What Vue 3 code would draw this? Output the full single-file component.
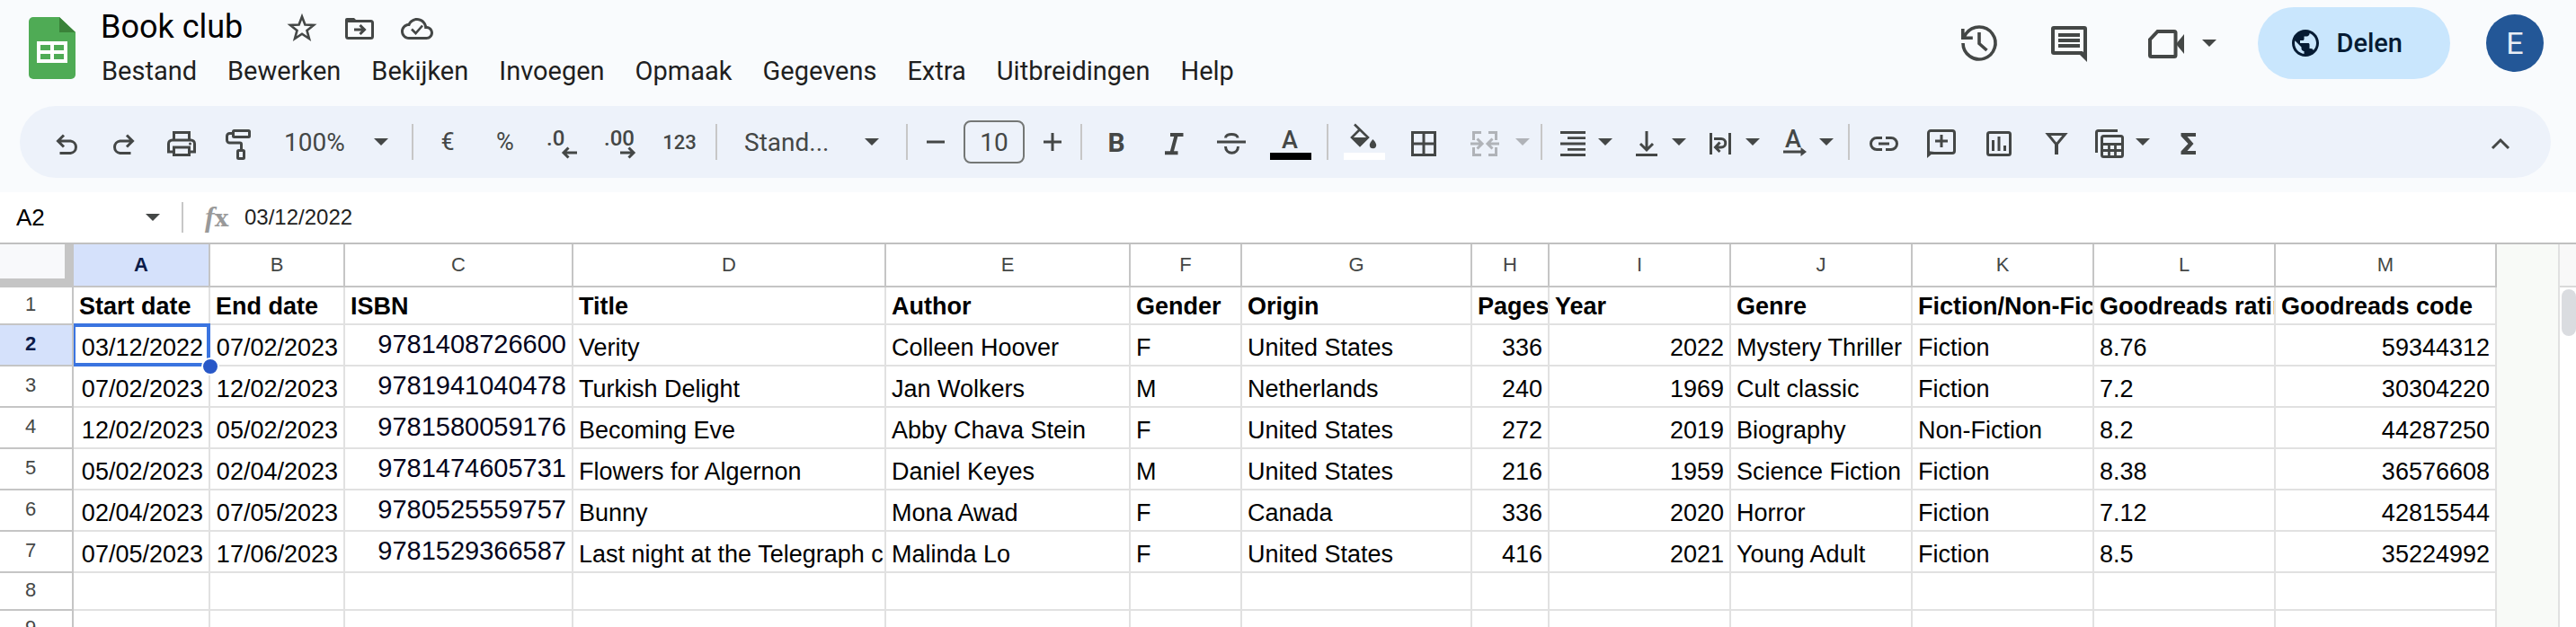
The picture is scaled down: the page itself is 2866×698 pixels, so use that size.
<script setup>
import { h, ref } from 'vue'

const icons = {
  undo: '<path d="M17 12.5l-6.500 6.500 6.500 6.500M11 19h13.500a6.800 6.800 0 0 1 0 13.500H12.500"/>',
  redo: '<path d="M23 12.500l6.500 6.500-6.500 6.500M29 19H15.500a6.800 6.800 0 0 0 0 13.500H27.500"/>',
  print:
    '<path d="M11.500 18V9.500h17V18M10 31H5.500v-9a4 4 0 0 1 4-4h21a4 4 0 0 1 4 4v9H30"/><path d="M11.500 26h17v8.500h-17z"/><circle cx="29.500" cy="22" r="1.500" fill="currentColor" stroke="none"/>',
  roller:
    '<rect x="13.500" y="7.500" width="18" height="7" rx="1"/><path d="M13 10.500h-3.500a3 3 0 0 0-3 3V18a3 3 0 0 0 3 3H21a1.500 1.500 0 0 1 1.500 1.500V29"/><rect x="18.500" y="29.500" width="7" height="9" rx="1"/>',
  decLess:
    '<text x="2" y="24">.0</text><path d="M21 32h15M26.500 26.500L21 32l5.500 5.500"/>',
  decMore:
    '<text x="2" y="24">.00</text><path d="M20 32h15M29.500 26.500L35 32l-5.500 5.500"/>',
  minus: '<path d="M10 20h20"/>',
  plus: '<path d="M10 20h20M20 10v20"/>',
  italic: '<path d="M16 12h14.500M10 32.200h14.500M22.800 12l-5.300 20" stroke-width="4"/>',
  strike:
    '<path d="M4 20h32M13.500 15.500c0-5.500 13.500-5.500 13.500 0M13.500 25c0 9.500 14 9.500 14 0"/>',
  textColor: '<text x="10" y="27">A</text><path d="M-3 36h46" stroke="#000" stroke-width="8"/>',
  fill:
    '<path d="M9 0.500l15 14.500-9 9L6 15l9-9" stroke-width="2.600"/><path d="M5 15h20L15 25z" fill="currentColor" stroke="none"/><path d="M29.500 17s-3.700 4-3.700 6.600a3.700 3.700 0 0 0 7.400 0c0-2.600-3.700-6.600-3.700-6.600z" fill="currentColor" stroke="none"/><path d="M-3 36h46" stroke="#fff" stroke-width="8"/>',
  borders: '<path d="M7.500 9.500h25v25h-25zM20 9.500v25M7.500 22h25"/>',
  merge:
    '<path d="M7.500 18V9.500H16M24 9.500h8.500V18M32.500 26v8.500H24M16 34.500H7.500V26M4 22h12M11.500 16.500L17 22l-5.500 5.500M36 22H24M28.500 16.500L23 22l5.500 5.500"/>',
  alignRight: '<path d="M6 9.500h28M14 15.700h20M6 22h28M14 28.300h20M6 34.500h28" stroke-width="2.800"/>',
  alignBottom: '<path d="M20 8v21M13 22l7 7 7-7M8 34.500h24"/>',
  wrap: '<path d="M9.500 10v24M30.500 10v24M13 16.500h8a4.700 4.700 0 0 1 0 9.500h-5M19.500 20.500L14.500 26l5 5"/>',
  rotate:
    '<text x="10" y="26">A</text><path d="M8 31h22"/><path d="M27.500 26v10l6.500-5z" fill="currentColor" stroke="none"/>',
  link: '<path d="M18 15.500h-6a6.500 6.500 0 0 0 0 13h6M22 15.500h6a6.500 6.500 0 0 1 0 13h-6M14 22h12"/>',
  comment:
    '<path d="M5.500 34V10A2.500 2.500 0 0 1 8 7.500h24a2.500 2.500 0 0 1 2.500 2.500v20a2.500 2.500 0 0 1-2.500 2.500H8M20 12v14M13 19h14"/><path d="M4 38v-8l8 1z" fill="currentColor" stroke="none"/>',
  chart:
    '<rect x="7.500" y="9.500" width="25" height="25" rx="2"/><path d="M13.500 18v12M20 14v16M26.500 24v6"/>',
  filter: '<path d="M10.500 11.500h19L20 23z"/><path d="M20 22v12" stroke-width="4"/>',
  tables:
    '<path d="M4.500 32V9.500a2 2 0 0 1 2-2H28"/><rect x="10.500" y="13.500" width="23" height="23" rx="2"/><path d="M10.500 22.500h23M10.500 29.500h23M18.500 22.500v14M25.500 22.500v14" stroke-width="2.800"/>',
  sum: '<path d="M12.500 10H29v4H19.500l7 8-7 8H29v4H12.500v-3.500l8-8.500-8-8.500z" fill="currentColor" stroke="none"/>',
  collapse: '<path d="M11 27l9-9 9 9"/>',
  star: '<path d="M20 8.500l3.400 9 9.600.4-7.500 6 2.500 9.100-8-5.300-8 5.300 2.500-9.100-7.500-6 9.600-.4z" stroke-width="2.600"/>',
  move:
    '<path d="M5.500 13v17.500a2 2 0 0 0 2 2h25a2 2 0 0 0 2-2v-15a2 2 0 0 0-2-2H6"/><path d="M4 14v-2a2 2 0 0 1 2-2h8l4 4z" fill="currentColor" stroke="none"/><path d="M14 23h11M20.500 18l5 5-5 5"/>',
  cloud:
    '<g transform="translate(2 4) scale(1.500)" stroke="none" fill="currentColor"><path d="M19.350 10.040C18.670 6.590 15.640 4 12 4 9.110 4 6.600 5.640 5.350 8.040 2.340 8.360 0 10.910 0 14c0 3.310 2.690 6 6 6h13c2.760 0 5-2.240 5-5 0-2.640-2.050-4.780-4.650-4.960zM19 18H6c-2.210 0-4-1.790-4-4s1.790-4 4-4h.71C7.370 7.690 9.480 6 12 6c3.040 0 5.500 2.460 5.500 5.500v.5H19c1.660 0 3 1.340 3 3s-1.340 3-3 3z"/></g><path d="M14 22.500l4.500 4.500 7.500-8.500" stroke-width="2.600"/>',
  history:
    '<path d="M6 24a18 18 0 1 0 3.500-10.700L6.500 18M5.800 8v10.200h11M24 12v12.500l8.500 7.500" stroke-width="3.600"/>',
  notes:
    '<path d="M6 8a1 1 0 0 1 1-1h34a1 1 0 0 1 1 1v31l-4-4H7a1 1 0 0 1-1-1zM12 15h24M12 21h24M12 27h24" stroke-width="4"/><path d="M34 35h10v10z" fill="currentColor" stroke="none"/>',
  video:
    '<path d="M14.500 11H33a1.500 1.500 0 0 1 1.500 1.500v25A1.500 1.500 0 0 1 33 39H7.500A1.500 1.500 0 0 1 6 37.500V20z" stroke-width="4"/><path d="M44 14l-9 11 9 11z" fill="currentColor" stroke="none"/>',
  globe:
    '<path transform="scale(1.500)" stroke="none" fill="currentColor" d="M12 2C6.480 2 2 6.480 2 12s4.480 10 10 10 10-4.480 10-10S17.520 2 12 2zm-1 17.930c-3.950-.49-7-3.850-7-7.930 0-.62.08-1.210.21-1.790L9 15v1c0 1.100.9 2 2 2v1.930zm6.900-2.540c-.26-.81-1-1.390-1.900-1.390h-1v-3c0-.55-.45-1-1-1H8v-2h2c.55 0 1-.45 1-1V7h2c1.100 0 2-.9 2-2v-.41c2.930 1.190 5 4.060 5 7.410 0 2.080-.8 3.970-2.100 5.390z"/>',
}

const Icon = (props) =>
  h('svg', {
    viewBox: `0 0 ${props.size || 40} ${props.size || 40}`,
    width: props.size || 40,
    height: props.size || 40,
    fill: 'none',
    stroke: 'currentColor',
    'stroke-width': 3,
    'aria-hidden': 'true',
    innerHTML: icons[props.name],
  })
Icon.props = ['name', 'size']

const Caret = () =>
  h('svg', { viewBox: '0 0 16 8', width: 16, height: 8, 'aria-hidden': 'true' }, [
    h('path', { d: 'M0 0h16L8 8z', fill: 'currentColor' }),
  ])

const title = ref('Book club')
const zoom = ref('100%')
const font = ref('Stand...')
const fontSize = ref('10')
const cellName = ref('A2')
const cellValue = ref('03/12/2022')

const menus = ['Bestand', 'Bewerken', 'Bekijken', 'Invoegen', 'Opmaak', 'Gegevens', 'Extra', 'Uitbreidingen', 'Help']

const alignMenus = [
  ['alignRight', 'Horizontaal uitlijnen'],
  ['alignBottom', 'Verticaal uitlijnen'],
  ['wrap', 'Tekstterugloop'],
  ['rotate', 'Tekst draaien'],
]
const insertTools = [
  ['link', 'Link invoegen'],
  ['comment', 'Opmerking toevoegen'],
  ['chart', 'Diagram invoegen'],
  ['filter', 'Filter maken'],
]

const columns = [
  { name: 'A', width: 152, align: 'right' },
  { name: 'B', width: 150, align: 'right' },
  { name: 'C', width: 254, align: 'isbn' },
  { name: 'D', width: 348 },
  { name: 'E', width: 272 },
  { name: 'F', width: 124 },
  { name: 'G', width: 256 },
  { name: 'H', width: 86, align: 'right' },
  { name: 'I', width: 202, align: 'right' },
  { name: 'J', width: 202 },
  { name: 'K', width: 202 },
  { name: 'L', width: 202 },
  { name: 'M', width: 246, align: 'right' },
]

const rows = [
  ['Start date', 'End date', 'ISBN', 'Title', 'Author', 'Gender', 'Origin', 'Pages', 'Year', 'Genre', 'Fiction/Non-Fiction', 'Goodreads rating', 'Goodreads code'],
  ['03/12/2022', '07/02/2023', '9781408726600', 'Verity', 'Colleen Hoover', 'F', 'United States', '336', '2022', 'Mystery Thriller', 'Fiction', '8.76', '59344312'],
  ['07/02/2023', '12/02/2023', '9781941040478', 'Turkish Delight', 'Jan Wolkers', 'M', 'Netherlands', '240', '1969', 'Cult classic', 'Fiction', '7.2', '30304220'],
  ['12/02/2023', '05/02/2023', '9781580059176', 'Becoming Eve', 'Abby Chava Stein', 'F', 'United States', '272', '2019', 'Biography', 'Non-Fiction', '8.2', '44287250'],
  ['05/02/2023', '02/04/2023', '9781474605731', 'Flowers for Algernon', 'Daniel Keyes', 'M', 'United States', '216', '1959', 'Science Fiction', 'Fiction', '8.38', '36576608'],
  ['02/04/2023', '07/05/2023', '9780525559757', 'Bunny', 'Mona Awad', 'F', 'Canada', '336', '2020', 'Horror', 'Fiction', '7.12', '42815544'],
  ['07/05/2023', '17/06/2023', '9781529366587', 'Last night at the Telegraph club', 'Malinda Lo', 'F', 'United States', '416', '2021', 'Young Adult', 'Fiction', '8.5', '35224992'],
  [],
  [],
]

const isSelected = (r, c) => r === 1 && c === 0
</script>

<template>
  <div class="app">
    <header class="header">
      <a class="logo" href="#" aria-label="Spreadsheets">
        <svg viewBox="0 0 52 70" width="52" height="70" aria-hidden="true">
          <path d="M5 0h29l18 17v47a5 5 0 0 1-5 5H5a5 5 0 0 1-5-5V5a5 5 0 0 1 5-5z" fill="#4fab55" />
          <path d="M34 0l18 17H34z" fill="#3a8239" />
          <path d="M9 27h34v24H9z" fill="#fff" />
          <path d="M13 31h11v6H13zM28 31h11v6H28zM13 41h11v6H13zM28 41h11v6H28z" fill="#4fab55" />
        </svg>
      </a>
      <div class="doc">
        <div class="doc-title">
          <input v-model="title" class="title-input" aria-label="Naam van document" />
          <button class="tool" aria-label="Ster"><Icon name="star" /></button>
          <button class="tool" aria-label="Verplaatsen"><Icon name="move" /></button>
          <button class="tool" aria-label="Documentstatus"><Icon name="cloud" /></button>
        </div>
        <nav class="menus">
          <button v-for="m in menus" :key="m" class="menu">{{ m }}</button>
        </nav>
      </div>
      <div class="actions">
        <button class="action" aria-label="Versiegeschiedenis"><Icon name="history" :size="48" /></button>
        <button class="action" aria-label="Opmerkingen"><Icon name="notes" :size="48" /></button>
        <button class="call" aria-label="Videogesprek"><Icon name="video" :size="48" /><Caret /></button>
        <button class="share"><Icon name="globe" :size="36" />Delen</button>
        <button class="avatar" aria-label="Account">E</button>
      </div>
    </header>

    <div class="toolbar" role="toolbar">
      <button class="tool" aria-label="Ongedaan maken"><Icon name="undo" /></button>
      <button class="tool" aria-label="Opnieuw"><Icon name="redo" /></button>
      <button class="tool" aria-label="Afdrukken"><Icon name="print" /></button>
      <button class="tool" aria-label="Opmaak kopiëren"><Icon name="roller" /></button>
      <label class="pick zoom">
        <select v-model="zoom" aria-label="Zoomen"><option>100%</option></select><Caret />
      </label>
      <span class="sep"></span>
      <button class="tool symbol" aria-label="Valuta">€</button>
      <button class="tool symbol" aria-label="Percentage">%</button>
      <button class="tool" aria-label="Minder decimalen"><Icon name="decLess" /></button>
      <button class="tool" aria-label="Meer decimalen"><Icon name="decMore" /></button>
      <button class="tool wide digits" aria-label="Meer indelingen">123</button>
      <span class="sep"></span>
      <label class="pick font">
        <select v-model="font" aria-label="Lettertype"><option>Stand...</option></select><Caret />
      </label>
      <span class="sep"></span>
      <button class="tool step" aria-label="Kleiner"><Icon name="minus" /></button>
      <input v-model="fontSize" class="size" aria-label="Lettergrootte" />
      <button class="tool step" aria-label="Groter"><Icon name="plus" /></button>
      <span class="sep"></span>
      <button class="tool bold" aria-label="Vet">B</button>
      <button class="tool" aria-label="Cursief"><Icon name="italic" /></button>
      <button class="tool" aria-label="Doorhalen"><Icon name="strike" /></button>
      <button class="tool wide letter" aria-label="Tekstkleur"><Icon name="textColor" /></button>
      <span class="sep"></span>
      <button class="tool wide" aria-label="Opvulkleur"><Icon name="fill" /></button>
      <button class="tool" aria-label="Randen"><Icon name="borders" /></button>
      <button class="combo merge" disabled aria-label="Cellen samenvoegen"><Icon name="merge" /><Caret /></button>
      <span class="sep"></span>
      <button v-for="[icon, label] in alignMenus" :key="icon" class="combo letter" :aria-label="label">
        <Icon :name="icon" /><Caret />
      </button>
      <span class="sep"></span>
      <button v-for="[icon, label] in insertTools" :key="icon" class="tool" :aria-label="label">
        <Icon :name="icon" />
      </button>
      <button class="combo" aria-label="Tabelweergaven"><Icon name="tables" /><Caret /></button>
      <button class="tool" aria-label="Functies"><Icon name="sum" /></button>
      <button class="tool collapse" aria-label="Menu's verbergen"><Icon name="collapse" /></button>
    </div>

    <div class="formula">
      <label class="name-box">
        <input v-model="cellName" aria-label="Naamvak" /><Caret />
      </label>
      <span class="fx" aria-hidden="true"><i>f</i>x</span>
      <input v-model="cellValue" class="value" aria-label="Formulebalk" />
    </div>

    <main class="sheet">
      <div class="viewport">
        <table class="grid">
          <colgroup>
            <col class="row-col" />
            <col v-for="c in columns" :key="c.name" :style="{ width: c.width + 'px' }" />
          </colgroup>
          <thead>
            <tr>
              <td class="corner"></td>
              <th v-for="(c, i) in columns" :key="c.name" scope="col" :class="{ active: i === 0 }">{{ c.name }}</th>
            </tr>
          </thead>
          <tbody>
            <tr v-for="(row, r) in rows" :key="r" :class="{ heading: r === 0, filled: r > 0 && row.length }">
              <th scope="row" :class="{ active: r === 1 }">{{ r + 1 }}</th>
              <td v-for="(c, i) in columns" :key="c.name" :class="[r > 0 && c.align, { selected: isSelected(r, i) }]">
                <div class="cell">{{ row[i] }}</div>
                <span v-if="isSelected(r, i)" class="outline"></span>
                <span v-if="isSelected(r, i)" class="handle"></span>
              </td>
            </tr>
          </tbody>
        </table>
      </div>
      <div class="scrollbar">
        <div class="scroll-top"></div>
        <div class="thumb"></div>
      </div>
    </main>
  </div>
</template>

<style>
html,
body {
  overflow: hidden;
}
</style>

<style scoped>
.app,
.app * {
  box-sizing: border-box;
}
.app {
  display: flex;
  flex-direction: column;
  height: 100vh;
  background: #f9fbfd;
  color: #444746;
  font-family: Roboto, "Liberation Sans", sans-serif;
  font-size: 28px;
}
button,
input,
select {
  margin: 0;
  padding: 0;
  border: 0;
  background: none;
  color: inherit;
  font: inherit;
  outline: none;
}
svg {
  display: block;
  flex: none;
  overflow: visible;
}
.app :deep(svg text) {
  fill: currentColor;
  stroke: none;
  font-weight: 500;
  font-size: 24px;
}
.letter :deep(svg text) {
  font-size: 27px;
}

/* Header */
.header {
  display: flex;
  align-items: flex-start;
  min-height: 118px;
  padding: 8px 36px 0 32px;
}
.logo {
  margin-top: 11px;
}
.doc {
  display: flex;
  flex-direction: column;
  gap: 5px;
  margin-left: 12px;
}
.doc-title {
  display: flex;
  align-items: center;
  height: 44px;
  padding-left: 16px;
}
.title-input {
  width: 192px;
  color: #000;
  font-size: 36px;
}
.menus {
  display: flex;
}
.menu {
  height: 44px;
  padding: 0 17px;
  color: #1f1f1f;
  font-size: 29px;
  white-space: nowrap;
}
.actions {
  display: flex;
  align-items: center;
  height: 80px;
  margin-left: auto;
}
.action {
  display: flex;
  justify-content: center;
  width: 100px;
}
.call {
  display: flex;
  align-items: center;
  gap: 16px;
  padding-left: 34px;
}
.share {
  display: flex;
  align-items: center;
  gap: 16px;
  height: 80px;
  margin-left: 46px;
  padding: 0 53px 0 35px;
  border-radius: 40px;
  background: #c9e6fd;
  color: #061b33;
  font-size: 29px;
  font-weight: 500;
}
.avatar {
  width: 64px;
  height: 64px;
  margin-left: 40px;
  border-radius: 50%;
  background: #235797;
  color: #e9eef5;
  font-size: 34px;
}

/* Toolbar */
.toolbar {
  display: flex;
  align-items: center;
  flex: none;
  height: 80px;
  margin: 0 28px 16px 22px;
  padding: 0 24px 0 20px;
  border-radius: 40px;
  background: #edf2fa;
}
.tool {
  display: flex;
  align-items: center;
  justify-content: center;
  flex: none;
  width: 64px;
  height: 56px;
}
.wide {
  width: 68px;
}
.step {
  width: 50px;
}
.symbol {
  font-size: 27px;
}
.digits {
  font-size: 22px;
  font-weight: 500;
}
.bold {
  font-size: 30px;
  font-weight: 700;
}
.collapse {
  margin-left: auto;
}
.pick {
  display: flex;
  align-items: center;
  flex: none;
}
.pick select {
  appearance: none;
  flex: 1;
  min-width: 0;
}
.zoom {
  width: 154px;
  padding: 0 20px 0 18px;
}
.font {
  width: 198px;
  padding: 0 24px;
}
.sep {
  flex: none;
  width: 2px;
  height: 40px;
  margin: 0 6px;
  background: #c7c7c7;
}
.size {
  flex: none;
  width: 68px;
  height: 48px;
  margin: 0 6px;
  border: 2px solid #747775;
  border-radius: 8px;
  text-align: center;
}
.combo {
  display: flex;
  align-items: center;
  flex: none;
  gap: 8px;
  height: 56px;
  padding: 0 10px 0 8px;
}
.merge {
  gap: 14px;
  padding: 0 6px 0 16px;
  color: #b0b3b8;
}

/* Formula bar */
.formula {
  display: flex;
  align-items: center;
  flex: none;
  height: 58px;
  border-bottom: 2px solid #c0c0c0;
  background: #fff;
  font-family: "Liberation Sans", Arial, sans-serif;
}
.name-box {
  display: flex;
  align-items: center;
  height: 34px;
  width: 204px;
  padding: 0 24px 0 18px;
  border-right: 2px solid #c7c7c7;
}
.name-box input {
  flex: 1;
  min-width: 0;
  color: #000;
  font-size: 26px;
}
.fx {
  width: 68px;
  padding-left: 24px;
  color: #999;
  font-family: "DejaVu Serif", serif;
  font-size: 26px;
  font-weight: 700;
  line-height: 32px;
}
.fx i {
  font-family: "Liberation Serif", serif;
  font-size: 32px;
}
.value {
  flex: 1;
  color: #1f1f1f;
  font-size: 24px;
}

/* Sheet */
.sheet {
  display: flex;
  flex: 1;
  min-height: 0;
  background: #f8faf7;
}
.viewport {
  flex: 1;
  min-width: 0;
  overflow: hidden;
}
.grid {
  width: 0;
  border-spacing: 0;
  table-layout: fixed;
  background: #fff;
  color: #000;
  font-family: "Liberation Sans", Arial, sans-serif;
}
.row-col {
  width: 82px;
}
.grid th {
  padding: 0;
  border-right: 2px solid #c5c5c5;
  border-bottom: 2px solid #c5c5c5;
  color: #444746;
  font-size: 22px;
  font-weight: 400;
  line-height: 24px;
}
.grid thead th {
  height: 48px;
}
.grid tbody th {
  padding: 0 12px 3px 0;
}
.grid th.active {
  background: #d5e1fb;
  color: #0b1b49;
  font-weight: 700;
}
.corner {
  height: 48px;
  padding: 0;
  border-right: 10px solid #c5c5c5;
  border-bottom: 10px solid #c5c5c5;
  background: #f8f9fb;
}
.grid tbody tr {
  height: 42px;
}
.grid tbody tr.filled {
  height: 46px;
}
.grid tbody td {
  position: relative;
  padding: 0;
  border-right: 2px solid #e1e1e1;
  border-bottom: 2px solid #e1e1e1;
  vertical-align: bottom;
}
.cell {
  overflow: hidden;
  padding: 0 6px 4px;
  font-size: 27px;
  line-height: 30px;
  white-space: nowrap;
}
.heading .cell {
  font-weight: 700;
}
.right .cell {
  text-align: right;
}
.isbn .cell {
  padding-bottom: 8px;
  color: #04041c;
  font-size: 29px;
  text-align: right;
}
.outline {
  position: absolute;
  inset: -2px -2px -2px 0;
  border: 4px solid #3a74e0;
  border-left-width: 2px;
}
.handle {
  position: absolute;
  right: -12px;
  bottom: -12px;
  z-index: 1;
  width: 20px;
  height: 20px;
  border: 2px solid #fff;
  border-radius: 50%;
  background: #2858c8;
}
.scrollbar {
  flex: none;
  width: 20px;
  border-left: 2px solid #e1e1e1;
  background: #fff;
}
.scroll-top {
  height: 48px;
  border-bottom: 2px solid #d9d9d9;
  background: #f8f8f8;
}
.thumb {
  height: 52px;
  margin: 2px 0 0 2px;
  border-radius: 8px;
  background: #dadce0;
}
</style>
